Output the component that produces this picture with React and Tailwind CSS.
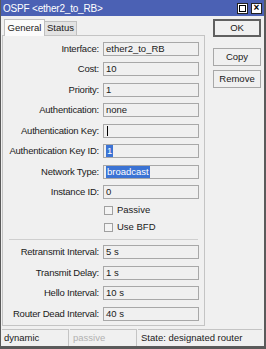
import React from 'react';

const font = { fontFamily: '"Liberation Sans", Arial, sans-serif' };

function Field({ label, value, selected, cursor }) {
  return (
    <div className="flex items-center h-[14px]">
      <div className="w-[97px] text-right pr-[1px] tracking-[-0.2px] text-[#1a1a1a]">{label}</div>
      <div className="ml-[3px] w-[96px] h-[14px] border border-[#a8a8a8] bg-[#f0f0f0] flex items-center pl-[2px]">
        {selected ? (
          <span className="bg-[#3b73d4] text-white leading-[12px] px-[1px]">{value}</span>
        ) : cursor ? (
          <span className="block w-[1px] h-[10px] bg-black ml-[1px]" />
        ) : (
          <span className="text-[#1a1a1a]">{value}</span>
        )}
      </div>
    </div>
  );
}

function Check({ label }) {
  return (
    <div className="flex items-center h-[10px] pl-[101px]">
      <span className="w-[9px] h-[9px] border border-[#a0a0a0] bg-[#f4f4f4]" />
      <span className="ml-[4px] text-[#1a1a1a]">{label}</span>
    </div>
  );
}

function Btn({ children, primary }) {
  return (
    <div
      className={`w-[48px] h-[18px] flex items-center justify-center bg-[#f0f0f0] text-[#1a1a1a] ${
        primary ? 'border-2 border-[#606060]' : 'border border-[#a8a8a8]'
      }`}
    >
      {children}
    </div>
  );
}

export default function App() {
  return (
    <div
      style={font}
      className="w-[266px] h-[349px] bg-[#f0f0f0] border-l border-r-2 border-b-[3px] border-[#5a5a5a] flex flex-col text-[9.5px] overflow-hidden"
    >
      {/* Title bar */}
      <div className="h-[16px] bg-[#4b61b4] flex items-center justify-between pl-[2px] pr-[2px] shrink-0">
        <span className="text-white text-[10px] tracking-[-0.2px]">OSPF &lt;ether2_to_RB&gt;</span>
        <div className="flex gap-[3px]">
          <div className="w-[11px] h-[11px] bg-white border border-[#222] flex items-center justify-center">
            <span className="w-[7px] h-[7px] border border-black" />
          </div>
          <div className="w-[11px] h-[11px] bg-white border border-[#222] flex items-center justify-center text-black font-bold text-[10px] leading-none">
            ×
          </div>
        </div>
      </div>

      <div className="flex flex-1">
        {/* Left: tabs + panel */}
        <div className="flex flex-col pl-[1px] pt-[2px]">
          <div className="flex items-end h-[17px] pl-[2px]">
            <div className="h-[17px] w-[41px] bg-[#fbfbfb] border border-b-0 border-[#c0c0c0] flex items-center justify-center text-[#1a1a1a] relative z-10 mb-[-1px]">
              General
            </div>
            <div className="h-[14px] w-[32px] bg-[#e3e3e3] border border-b-0 border-l-0 border-[#c0c0c0] flex items-center justify-center text-[#1a1a1a]">
              Status
            </div>
          </div>
          <div className="w-[203px] h-[291px] border border-[#c4c4c4] bg-[#f0f0f0] pt-[6px] flex flex-col">
            <div className="flex flex-col gap-[6.45px]">
              <Field label="Interface:" value="ether2_to_RB" />
              <Field label="Cost:" value="10" />
              <Field label="Priority:" value="1" />
              <Field label="Authentication:" value="none" />
              <Field label="Authentication Key:" cursor />
              <Field label="Authentication Key ID:" value="1" selected />
              <Field label="Network Type:" value="broadcast" selected />
              <Field label="Instance ID:" value="0" />
            </div>
            <div className="flex flex-col gap-[7px] mt-[6px]">
              <Check label="Passive" />
              <Check label="Use BFD" />
            </div>
            <div className="mx-[6px] mt-[7px] w-[189px] h-[1px] bg-[#cfcfcf]" />
            <div className="flex flex-col gap-[6.7px] mt-[5px]">
              <Field label="Retransmit Interval:" value="5 s" />
              <Field label="Transmit Delay:" value="1 s" />
              <Field label="Hello Interval:" value="10 s" />
              <Field label="Router Dead Interval:" value="40 s" />
            </div>
          </div>
        </div>

        {/* Right: buttons */}
        <div className="flex flex-col gap-[4px] pl-[8px] pt-[3px]">
          <Btn primary>OK</Btn>
          <div className="mt-[3px]" />
          <Btn>Copy</Btn>
          <Btn>Remove</Btn>
        </div>
      </div>

      {/* Status bar */}
      <div className="h-[17px] flex items-stretch pl-[1px] pr-[2px] shrink-0">
        <div className="w-[67px] border-t border-r border-[#c4c4c4] flex items-center pl-[2px] text-[#1a1a1a]">dynamic</div>
        <div className="w-[67px] ml-[1px] border-t border-r border-[#c4c4c4] flex items-center pl-[3px] text-[#b0b0b0]">passive</div>
        <div className="flex-1 ml-[1px] border-t border-[#c4c4c4] flex items-center pl-[3px] text-[#1a1a1a]">State: designated router</div>
      </div>
    </div>
  );
}
